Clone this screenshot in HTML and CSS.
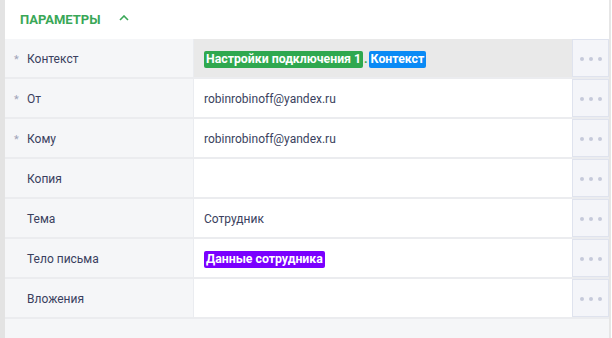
FILE: index.html
```html
<!doctype html>
<html lang="ru">
<head>
  <meta charset="UTF-8" />
  <title>Параметры</title>
  <link rel="stylesheet" href="styles.css">
</head>
<body>
  <section class="panel">
    <div class="panel-head">
      <span class="panel-title">Параметры</span>
      <svg class="chevron" width="10" height="6" viewBox="0 0 10 6">
        <path d="M1 5 L5 1 L9 5" fill="none" stroke="#3aa757" stroke-width="1.6" />
      </svg>
    </div>

    <div class="params">
      <div class="row row-active">
        <div class="label"><span class="req">*</span>Контекст</div>
        <div class="value">
          <span class="chip chip-green">Настройки подключения 1</span><span class="sep">.</span><span class="chip chip-blue">Контекст</span>
        </div>
        <div class="more"><i></i><i></i><i></i></div>
      </div>
      <div class="row">
        <div class="label"><span class="req">*</span>От</div>
        <div class="value">robinrobinoff@yandex.ru</div>
        <div class="more"><i></i><i></i><i></i></div>
      </div>
      <div class="row">
        <div class="label"><span class="req">*</span>Кому</div>
        <div class="value">robinrobinoff@yandex.ru</div>
        <div class="more"><i></i><i></i><i></i></div>
      </div>
      <div class="row">
        <div class="label"><span class="req"></span>Копия</div>
        <div class="value"></div>
        <div class="more"><i></i><i></i><i></i></div>
      </div>
      <div class="row">
        <div class="label"><span class="req"></span>Тема</div>
        <div class="value">Сотрудник</div>
        <div class="more"><i></i><i></i><i></i></div>
      </div>
      <div class="row">
        <div class="label"><span class="req"></span>Тело письма</div>
        <div class="value"><span class="chip chip-purple">Данные сотрудника</span></div>
        <div class="more"><i></i><i></i><i></i></div>
      </div>
      <div class="row">
        <div class="label"><span class="req"></span>Вложения</div>
        <div class="value"></div>
        <div class="more"><i></i><i></i><i></i></div>
      </div>
    </div>
  </section>
</body>
</html>
```

FILE: styles.css
```css
/* ------------------ Reset & Globals ------------------ */
* {
  margin: 0;
  padding: 0;
  box-sizing: border-box;
}
html, body {
  height: 100%;
}
body {
  font-family: Roboto, 'Noto Sans', sans-serif;
  font-size: 12px;
  color: #3a3f5e;
  background: #fff;
}

/* ------------------ Panel ------------------ */
.panel {
  height: 100%;
  margin-right: 1px;
  border-left: 5px solid #e3e3e3;
  border-right: 2px solid #e6e6e6;
  background: #f5f6f8;
}
.panel-head {
  height: 39px;
  display: flex;
  align-items: center;
  gap: 18px;
  padding-left: 15px;
  background: #fff;
}
.panel-title {
  color: #3aa757;
  font-weight: 700;
  font-size: 13px;
  text-transform: uppercase;
}
.chevron {
  margin-top: -3px;
}

/* ------------------ Rows ------------------ */
.row {
  height: 40px;
  display: flex;
  border-bottom: 2px solid #ebecef;
}
.label {
  width: 189px;
  display: flex;
  align-items: center;
  padding-top: 2px;
  background: #f5f6f8;
  border-right: 1px solid #eaecf0;
}
.req {
  width: 22px;
  padding-left: 9px;
  color: #a0a4b8;
  font-size: 11px;
}
.value {
  flex: 1;
  display: flex;
  align-items: center;
  padding: 2px 0 0 10px;
  background: #fff;
}
.row-active .value {
  background: #e9e9e9;
}
.chip {
  display: inline-block;
  padding: 1px 2px;
  border-radius: 2px;
  color: #fff;
  font-weight: 700;
  font-size: 12.3px;
  line-height: 15px;
}
.chip-green {
  background: #2fa84f;
}
.chip-blue {
  background: #0a8af5;
}
.chip-purple {
  background: #7a00ff;
}
.sep {
  color: #2fa84f;
  font-weight: 700;
  margin: 0 1px;
}

/* ------------------ More button ------------------ */
.more {
  width: 37px;
  display: flex;
  align-items: center;
  justify-content: center;
  gap: 5px;
  padding-top: 1px;
  background: #f4f5f9;
  border: 1px solid #dfe3ee;
}
.more i {
  width: 4px;
  height: 4px;
  border-radius: 50%;
  background: #c6cadb;
}
```
